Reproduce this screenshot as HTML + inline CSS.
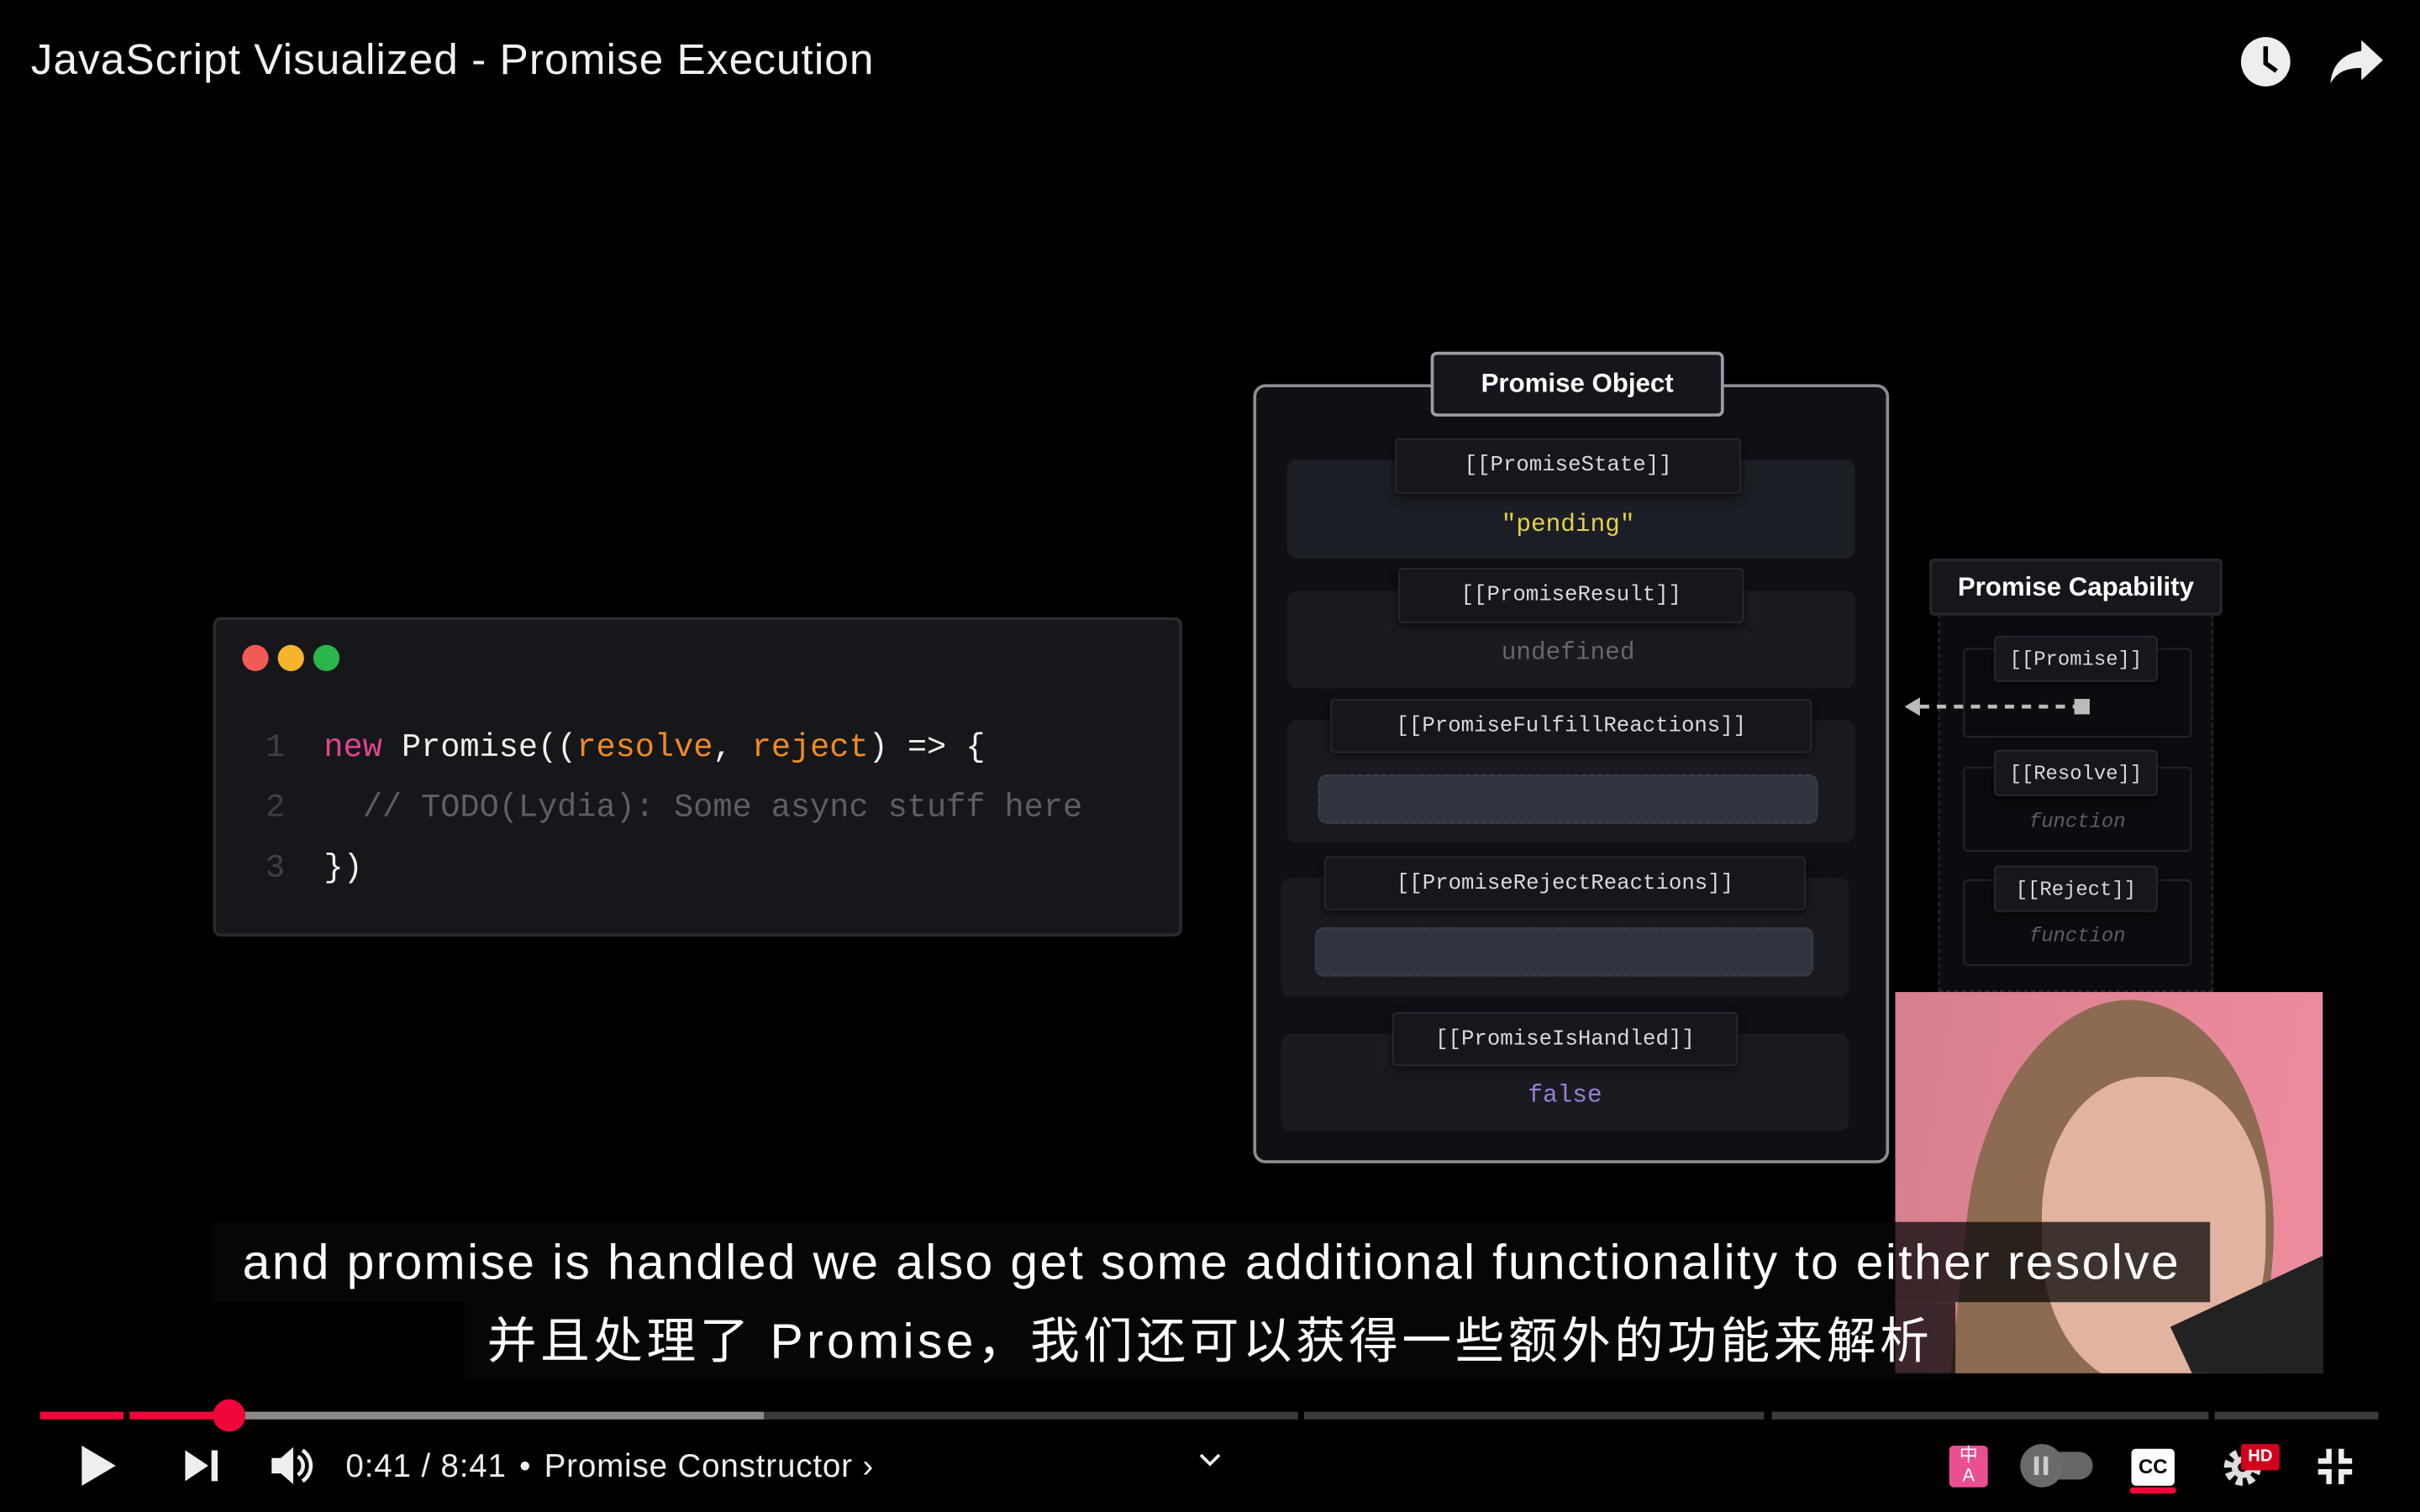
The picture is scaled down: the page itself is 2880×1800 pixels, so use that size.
<!DOCTYPE html>
<html><head><meta charset="utf-8"><style>
html,body{margin:0;padding:0;background:#000;width:2880px;height:1800px;overflow:hidden}
#w{position:absolute;left:0;top:0;width:1568px;height:980px;transform:scale(1.83673);transform-origin:0 0;font-family:"Liberation Sans",sans-serif;color:#fff}
.a{position:absolute}
.mono{font-family:"Liberation Mono",monospace}
.row{position:absolute;background:#1b1e25;border-radius:6px}
.lab{position:absolute;background:#15171d;border:1px solid #262932;border-radius:3px;box-shadow:0 2px 6px rgba(0,0,0,.6);font-family:"Liberation Mono",monospace;font-size:14px;color:#d8d9dc;text-align:center;box-sizing:border-box}
.bar{position:absolute;background:#30343f;border:1px dashed #3d4250;border-radius:6px;box-sizing:border-box}
.val{position:absolute;font-family:"Liberation Mono",monospace;font-size:16px;text-align:center}
.sb{position:absolute;border:1px solid #23262d;border-radius:3px;box-sizing:border-box}
.fn{position:absolute;font-family:"Liberation Mono",monospace;font-style:italic;font-size:13px;color:#5b5e66;text-align:center;width:148px}
.seg{position:absolute;top:915px;height:5px}
</style></head><body><div id="w">
<div class="a" style="left:20px;top:23px;font-size:28px;color:#f1f1f1;letter-spacing:0.55px">JavaScript Visualized - Promise Execution</div>
<svg class="a" style="left:1450px;top:22px" width="36" height="36" viewBox="0 0 36 36"><circle cx="18" cy="18" r="16" fill="#eee"/><path d="M18 8v11l7 5" stroke="#000" stroke-width="3" fill="none"/></svg>
<svg class="a" style="left:1508px;top:24px" width="38" height="32" viewBox="0 0 38 32"><path d="M22 2l14 13-14 13v-8C12 20 6 23 2 30c1-11 7-19 20-21z" fill="#eee"/></svg>

<div class="a" style="left:138px;top:400px;width:628px;height:207px;background:#16171b;border:2px solid #2a2b30;border-radius:5px;box-sizing:border-box"></div>
<div class="a" style="left:157px;top:418px;width:17px;height:17px;border-radius:50%;background:#f25a55"></div>
<div class="a" style="left:180px;top:418px;width:17px;height:17px;border-radius:50%;background:#f6b42c"></div>
<div class="a" style="left:203px;top:418px;width:17px;height:17px;border-radius:50%;background:#2cb54a"></div>
<div class="a mono" style="left:172px;top:466px;font-size:21px;line-height:39px;white-space:pre;color:#f0f0f0"><span style="color:#3e4047">1</span>  <span style="color:#e0468f">new</span> Promise((<span style="color:#f08a24">resolve</span>, <span style="color:#f08a24">reject</span>) =&gt; {
<span style="color:#3e4047">2</span>    <span style="color:#5d5f66">// TODO(Lydia): Some async stuff here</span>
<span style="color:#3e4047">3</span>  })</div>

<div class="a" style="left:812px;top:249px;width:412px;height:505px;background:#0f1014;border:2px solid #8b8d94;border-radius:8px;box-sizing:border-box"></div>
<div class="a" style="left:927px;top:228px;width:190px;height:42px;background:#15161b;border:2px solid #9c9ea5;border-radius:4px;box-sizing:border-box;font-size:17px;font-weight:bold;text-align:center;line-height:38px">Promise Object</div>

<div class="row" style="left:834px;top:298px;width:368px;height:64px"></div>
<div class="lab" style="left:904px;top:284px;width:224px;height:36px;line-height:34px">[[PromiseState]]</div>
<div class="val" style="left:834px;top:331px;width:364px;color:#e5d04a">"pending"</div>

<div class="row" style="left:834px;top:383px;width:368px;height:63px;background:#1a1b20"></div>
<div class="lab" style="left:906px;top:368px;width:224px;height:36px;line-height:34px">[[PromiseResult]]</div>
<div class="val" style="left:834px;top:414px;width:364px;color:#64676e">undefined</div>

<div class="row" style="left:834px;top:467px;width:368px;height:79px;background:#1a1b20"></div>
<div class="lab" style="left:862px;top:453px;width:312px;height:35px;line-height:35px">[[PromiseFulfillReactions]]</div>
<div class="bar" style="left:854px;top:502px;width:324px;height:32px"></div>

<div class="row" style="left:830px;top:569px;width:368px;height:77px;background:#1a1b20"></div>
<div class="lab" style="left:858px;top:555px;width:312px;height:35px;line-height:35px">[[PromiseRejectReactions]]</div>
<div class="bar" style="left:852px;top:601px;width:323px;height:32px"></div>

<div class="row" style="left:830px;top:670px;width:368px;height:63px;background:#1a1b20"></div>
<div class="lab" style="left:902px;top:656px;width:224px;height:35px;line-height:35px">[[PromiseIsHandled]]</div>
<div class="val" style="left:830px;top:701px;width:368px;color:#9a7fd8">false</div>

<div class="a" style="left:1256px;top:398px;width:178px;height:245px;border:1px dashed #2a2d34;border-top:none;background:#0b0c0f;box-sizing:border-box"></div>
<div class="a" style="left:1250px;top:362px;width:190px;height:37px;background:#15171c;border:2px solid #23262d;border-radius:3px;box-sizing:border-box;font-size:17px;font-weight:bold;text-align:center;line-height:33px">Promise Capability</div>
<div class="sb" style="left:1272px;top:420px;width:148px;height:58px"></div>
<div class="lab" style="left:1292px;top:412px;width:106px;height:30px;line-height:30px;font-size:13px">[[Promise]]</div>
<svg class="a" style="left:1230px;top:450px" width="126" height="16"><path d="M4 8l10-6v12z" fill="#bbb"/><path d="M14 8h102" stroke="#bbb" stroke-width="2.5" stroke-dasharray="6 5"/><rect x="114" y="3" width="10" height="10" fill="#bbb"/></svg>
<div class="sb" style="left:1272px;top:497px;width:148px;height:55px"></div>
<div class="lab" style="left:1292px;top:486px;width:106px;height:30px;line-height:30px;font-size:13px">[[Resolve]]</div>
<div class="fn" style="left:1272px;top:525px">function</div>
<div class="sb" style="left:1272px;top:570px;width:148px;height:56px"></div>
<div class="lab" style="left:1292px;top:561px;width:106px;height:30px;line-height:30px;font-size:13px">[[Reject]]</div>
<div class="fn" style="left:1272px;top:599px">function</div>

<div class="a" style="left:1228px;top:643px;width:277px;height:247px;overflow:hidden;background:linear-gradient(100deg,#d47f8e,#e8879a 60%,#ef8da0)">
 <div class="a" style="left:45px;top:5px;width:200px;height:320px;border-radius:48% 52% 0 0;background:#8c6b52;transform:rotate(6deg)"></div>
 <div class="a" style="left:95px;top:55px;width:145px;height:200px;border-radius:45%;background:#e2b3a0"></div>
 <div class="a" style="left:190px;top:190px;width:110px;height:80px;background:#222;transform:rotate(-25deg)"></div>
</div>

<div class="a" style="left:138px;top:792px;width:1294px;height:52px;background:rgba(8,8,8,.75);font-size:32px;letter-spacing:1.3px;text-align:center;line-height:52px;white-space:nowrap">and promise is handled we also get some additional functionality to either resolve</div>
<div class="a" style="left:301px;top:844px;width:966px;height:50px;background:rgba(8,8,8,.75);font-size:32px;letter-spacing:2.4px;text-align:center;line-height:50px;white-space:nowrap;font-family:'Liberation Sans','Noto Sans CJK SC',sans-serif">并且处理了 Promise，我们还可以获得一些额外的功能来解析</div>

<div class="seg" style="left:26px;width:54px;background:#f0063a"></div>
<div class="seg" style="left:84px;width:64px;background:#f0063a"></div>
<div class="seg" style="left:148px;width:347px;background:#8a8a8a"></div>
<div class="seg" style="left:495px;width:346px;background:#3a3a3a"></div>
<div class="seg" style="left:845px;width:298px;background:#3a3a3a"></div>
<div class="seg" style="left:1148px;width:283px;background:#3a3a3a"></div>
<div class="seg" style="left:1435px;width:106px;background:#3a3a3a"></div>
<div class="a" style="left:138px;top:907px;width:21px;height:21px;border-radius:50%;background:#f0063a"></div>

<svg class="a" style="left:50px;top:935px" width="28" height="30"><path d="M3 2l22 13-22 13z" fill="#eee"/></svg>
<svg class="a" style="left:118px;top:938px" width="26" height="24"><path d="M2 2l15 10-15 10z" fill="#eee"/><rect x="19" y="2" width="4" height="20" fill="#eee"/></svg>
<svg class="a" style="left:174px;top:936px" width="30" height="28"><path d="M2 9h6l8-7v24l-8-7H2z" fill="#eee"/><path d="M19 8a7 7 0 0 1 0 12M22 4a12 12 0 0 1 0 20" stroke="#eee" stroke-width="2.5" fill="none"/></svg>
<div class="a" style="left:224px;top:939px;font-size:21px;color:#eee;white-space:nowrap;letter-spacing:0.45px">0:41 / 8:41 <span style="margin:0 2px">•</span> Promise Constructor ›</div>
<svg class="a" style="left:776px;top:940px" width="16" height="12"><path d="M2 3l6 6 6-6" stroke="#eee" stroke-width="2" fill="none"/></svg>
<div class="a" style="left:1263px;top:937px;width:25px;height:27px;background:#ea4f92;border-radius:3px;font-size:12px;line-height:13px;text-align:center;color:#fff;font-family:'Liberation Sans','Noto Sans CJK SC',sans-serif">中<br>A</div>
<div class="a" style="left:1322px;top:941px;width:34px;height:18px;border-radius:9px;background:#666"></div>
<div class="a" style="left:1309px;top:936px;width:28px;height:28px;border-radius:50%;background:#6a6a6a"></div>
<div class="a" style="left:1318px;top:944px;width:3px;height:12px;background:#ccc"></div><div class="a" style="left:1324px;top:944px;width:3px;height:12px;background:#ccc"></div>
<div class="a" style="left:1381px;top:939px;width:28px;height:24px;background:#fff;border-radius:3px;color:#000;font-weight:bold;font-size:13px;text-align:center;line-height:24px">CC</div>
<div class="a" style="left:1380px;top:964px;width:30px;height:4px;background:#f0063a;border-radius:2px"></div>
<svg class="a" style="left:1440px;top:936px" width="26" height="28" viewBox="0 0 26 28"><circle cx="13" cy="15" r="9" fill="none" stroke="#ddd" stroke-width="6" stroke-dasharray="4 3"/><circle cx="13" cy="15" r="7" fill="#ddd"/><circle cx="13" cy="15" r="3" fill="#000"/></svg>
<div class="a" style="left:1452px;top:936px;width:25px;height:17px;background:#d0021b;border-radius:2px;font-size:11px;font-weight:bold;text-align:center;line-height:17px">HD</div>
<svg class="a" style="left:1500px;top:937px" width="26" height="27"><path d="M9 2v8H2M17 2v8h7M9 25v-8H2M17 25v-8h7" stroke="#eee" stroke-width="3.5" fill="none"/></svg>
</div></body></html>
